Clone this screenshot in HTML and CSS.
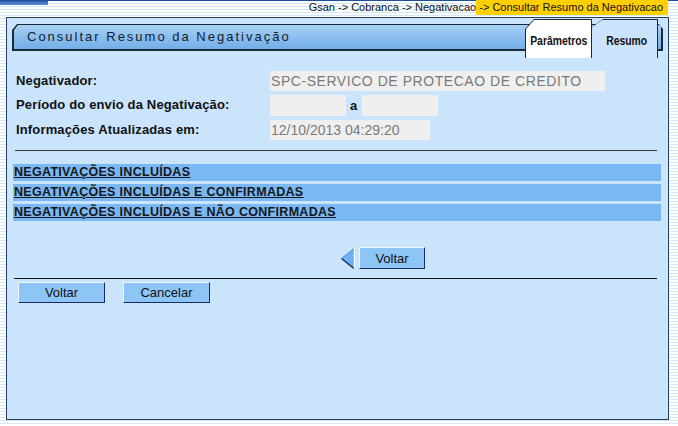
FILE: index.html
```html
<!DOCTYPE html>
<html lang="pt-BR">

<head>
    <meta charset="UTF-8">
    <title>Consultar Resumo da Negativação</title>
    <link rel="stylesheet" href="styles.css">
</head>

<body>
    <!-- faixa do topo com a trilha de navegação -->
    <div class="topo">
        <div class="barra-logo"></div>
        <div class="trilha">Gsan -&gt; Cobranca -&gt; Negativacao<span class="atual"> -&gt; Consultar Resumo da Negativacao</span></div>
    </div>

    <div class="painel">
        <!-- título e abas ficam na mesma célula do grid -->
        <div class="cabecalho">
            <div class="titulo-borda">
                <div class="titulo">Consultar Resumo da Negativação</div>
            </div>
            <div class="abas">
                <div class="aba aba-ativa">
                    <div class="aba-dentro"><span class="aba-texto">Parâmetros</span></div>
                </div>
                <div class="aba aba-resumo">
                    <div class="aba-dentro"><span class="aba-texto">Resumo</span></div>
                </div>
            </div>
        </div>

        <div class="form">
            <div class="rotulo">Negativador:</div>
            <div class="campo"><input class="entrada larga" type="text" value="SPC-SERVICO DE PROTECAO DE CREDITO" readonly></div>

            <div class="rotulo">Período do envio da Negativação:</div>
            <div class="campo">
                <input class="entrada curta" type="text" value="" readonly>
                <span class="letra-a">a</span>
                <input class="entrada curta" type="text" value="" readonly>
            </div>

            <div class="rotulo">Informações Atualizadas em:</div>
            <div class="campo"><input class="entrada media" type="text" value="12/10/2013 04:29:20" readonly></div>
        </div>

        <hr class="linha linha-form">

        <div class="links">
            <a class="faixa" href="#">NEGATIVAÇÕES INCLUÍDAS</a>
            <a class="faixa" href="#">NEGATIVAÇÕES INCLUÍDAS E CONFIRMADAS</a>
            <a class="faixa" href="#">NEGATIVAÇÕES INCLUÍDAS E NÃO CONFIRMADAS</a>
        </div>

        <div class="navegacao">
            <svg class="seta" width="14" height="21" viewBox="0 0 14 21">
                <polygon points="13,0.5 13,20.5 0.5,10.5" fill="#6cb2f2" />
                <polyline points="0.5,10.5 13,0.5" fill="none" stroke="#4f95dc" stroke-width="1" />
                <polyline points="0.5,10.5 13,20.5" fill="none" stroke="#1c2c55" stroke-width="1.4" />
                <line x1="13.4" y1="0.5" x2="13.4" y2="20.5" stroke="#ffffff" stroke-width="1.2" />
            </svg>
            <button class="botao botao-nav" type="button">Voltar</button>
        </div>

        <hr class="linha linha-botoes">

        <div class="botoes">
            <button class="botao" type="button">Voltar</button>
            <button class="botao" type="button">Cancelar</button>
        </div>
    </div>
</body>

</html>
```

FILE: styles.css
```css
/* página com o fundo listrado */

body {
    margin: 0;
    font-family: "Liberation Sans", Arial, sans-serif;
    color: #111;
    background: repeating-linear-gradient(to bottom, #d4e7f6 0, #d4e7f6 1px, #ffffff 1px, #ffffff 3px);
    height: 426px;
    overflow: hidden;
}


/* topo */

.topo {
    display: flex;
    justify-content: space-between;
    align-items: flex-start;
    height: 17px;
    border-top: 1px solid #1f4f95;
    box-sizing: border-box;
}

.barra-logo {
    width: 48px;
    height: 4px;
    background: linear-gradient(#2f62b5, #5c8fd9);
}

.trilha {
    font-size: 11px;
    line-height: 12px;
    margin-top: 0;
    margin-right: 10px;
    white-space: nowrap;
    color: #111;
}

.trilha .atual {
    background: #ffcf00;
    padding: 1px 5px 2px 0;
}


/* painel principal */

.painel {
    margin-left: 6px;
    width: 663px;
    height: 403px;
    box-sizing: border-box;
    border: 1px solid #24405f;
    background: #cae4fc;
}


/* título e abas */

.cabecalho {
    display: grid;
    margin: 1px 5px 0 5px;
}

.titulo-borda,
.abas {
    grid-area: 1 / 1;
}

.titulo-borda {
    margin-top: 5px;
    height: 27px;
    box-sizing: border-box;
    padding: 1px 2px 2px 2px;
    background: #1b2a3a;
    clip-path: polygon(5px 0, calc(100% - 4px) 0, 100% 5px, 100% 100%, 0 100%, 0 6px);
}

.titulo {
    height: 100%;
    padding-left: 13px;
    font-size: 13px;
    line-height: 24px;
    letter-spacing: 2px;
    color: #15202e;
    background: linear-gradient(#a9d1f6, #8ec0ef 45%, #74aee7);
    clip-path: polygon(4px 0, 100% 0, 100% 100%, 0 100%, 0 5px);
}

.abas {
    justify-self: end;
    display: flex;
    margin-right: 5px;
}

.aba {
    height: 39px;
    box-sizing: border-box;
    background: #1b2a3a;
    padding: 1px 1px 0 1px;
}

.aba-ativa {
    width: 67px;
    clip-path: polygon(9px 0, 100% 0, 100% 100%, 0 100%, 0 10px);
}

.aba-resumo {
    width: 66px;
    padding-left: 0;
    clip-path: polygon(11px 0, 100% 0, 100% 100%, 0 100%, 0 8px);
}

.aba-dentro {
    height: 100%;
    display: flex;
    justify-content: center;
    padding-top: 14px;
    box-sizing: border-box;
    background: #cbe4fc;
    clip-path: polygon(10px 0, 100% 0, 100% 100%, 0 100%, 0 7px);
}

.aba-ativa .aba-dentro {
    background: #ffffff;
    padding-left: 1px;
    clip-path: polygon(8px 0, 100% 0, 100% 100%, 0 100%, 0 9px);
}

/* não há fonte condensada instalada, então estreito o texto */
.aba-texto {
    display: inline-block;
    font-weight: bold;
    font-size: 13px;
    line-height: 14px;
    color: #111;
    white-space: nowrap;
    transform: scaleX(0.8);
}

.aba-resumo .aba-texto {
    margin-left: 4px;
}


/* formulário */

.form {
    display: grid;
    grid-template-columns: 254px 1fr;
    row-gap: 4px;
    margin: 13px 0 0 9px;
}

.rotulo {
    font-size: 13px;
    font-weight: bold;
    letter-spacing: 0.15px;
    line-height: 20px;
}

.campo {
    display: flex;
    align-items: center;
}

.entrada {
    height: 20px;
    box-sizing: border-box;
    border: none;
    padding: 0 1px;
    background: #efefef;
    font-family: "Liberation Sans", Arial, sans-serif;
    font-size: 14px;
    color: #7a7a7a;
    outline: none;
}

.larga {
    width: 335px;
    letter-spacing: 0.55px;
}

.curta {
    width: 76px;
    height: 21px;
}

.media {
    width: 160px;
}

.letra-a {
    font-size: 13px;
    font-weight: bold;
    margin: 0 5px 0 4px;
}


/* linhas horizontais */

.linha {
    border: none;
    height: 1px;
    margin: 0;
}

.linha-form {
    background: #3a3a3a;
    margin: 10px 11px 0 8px;
}

.linha-botoes {
    background: #111;
    margin: 9px 11px 0 7px;
}


/* faixas de links */

.links {
    display: flex;
    flex-direction: column;
    gap: 3px;
    margin: 13px 7px 0 6px;
}

.faixa {
    display: block;
    height: 17px;
    padding-left: 1px;
    background: #79b8f5;
    font-size: 12.5px;
    font-weight: bold;
    letter-spacing: 0.3px;
    line-height: 17px;
    color: #161616;
}


/* botões */

.navegacao {
    display: flex;
    align-items: center;
    gap: 4px;
    margin: 26px 0 0 334px;
}

.seta {
    display: block;
}

.botao {
    width: 87px;
    height: 21px;
    padding: 0;
    box-sizing: border-box;
    background: #8ec5f7;
    border: 1px solid;
    border-color: #eef7ff #1b2a66 #1b2a66 #eef7ff;
    font-family: "Liberation Sans", Arial, sans-serif;
    font-size: 13px;
    color: #111;
}

.botao-nav {
    width: 66px;
    height: 22px;
}

.botoes {
    display: flex;
    gap: 18px;
    margin: 3px 0 0 11px;
}
```
